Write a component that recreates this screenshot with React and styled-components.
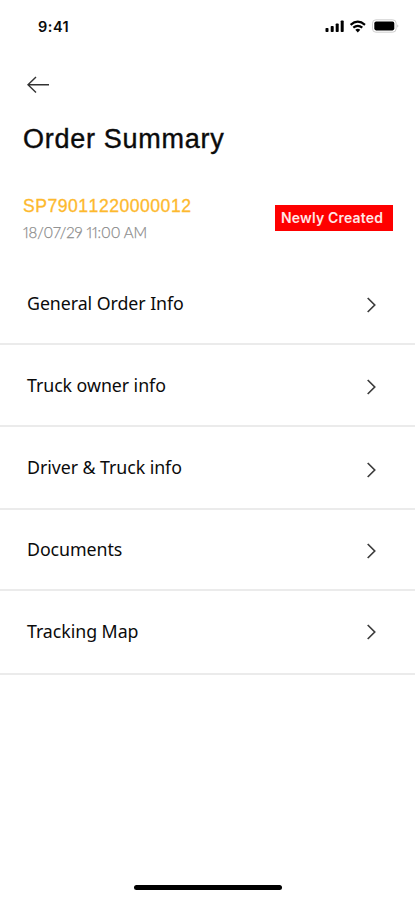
import React from "react";
import styled, { createGlobalStyle } from "styled-components";

const GlobalStyle = createGlobalStyle`
  * { box-sizing: border-box; }
  body { margin: 0; background: #fff; }
`;

const Screen = styled.main`
  display: flex;
  flex-direction: column;
  width: 415px;
  height: 900px;
  background: #fff;
  color: #0b0b0b;
  overflow: hidden;
  white-space: nowrap;
`;

const StatusBar = styled.div`
  display: flex;
  justify-content: space-between;
  align-items: center;
  height: 54px;
  padding: 0 15px 0 38px;
`;

const Clock = styled.span`
  font: 600 14.5px/18px Inter, sans-serif;
  letter-spacing: 0.5px;
`;

const StatusIcons = styled.svg`
  display: block;
  width: 76px;
  height: 18px;
`;

const BackButton = styled.button`
  display: flex;
  align-items: center;
  width: 50px;
  height: 60px;
  padding: 0;
  margin-left: 26px;
  border: 0;
  background: none;
`;

const Title = styled.h1`
  margin: 9px 0 0 23px;
  font: 400 27px/32px "Liberation Sans", Arial, sans-serif;
  letter-spacing: 0.72px;
  -webkit-text-stroke: 0.4px #0b0b0b;
`;

const OrderHeader = styled.header`
  display: flex;
  justify-content: space-between;
  align-items: flex-start;
  height: 107px;
  padding: 41px 22px 0 23px;
`;

const OrderId = styled.div`
  font: 400 17.6px/20px "Liberation Sans", Arial, sans-serif;
  font-kerning: none;
  letter-spacing: 0.5px;
  color: #fdb92e;
  -webkit-text-stroke: 0.3px #fdb92e;
`;

const OrderDate = styled.div`
  margin-top: 6px;
  font: 300 15px/20px Lato, sans-serif;
  letter-spacing: -0.1px;
  font-variant-numeric: proportional-nums;
  color: #8c8c8c;
  -webkit-text-stroke: 0.25px #8c8c8c;
`;

const Badge = styled.span`
  display: flex;
  align-items: center;
  width: 118px;
  height: 26px;
  margin-top: 9px;
  padding-left: 6px;
  background: #fe0000;
  color: #ffe6e6;
  font: 600 14px/18px Inter, sans-serif;
  letter-spacing: 0.18px;
`;

const Menu = styled.ul`
  margin: 0;
  padding: 0;
  list-style: none;
`;

const MenuRow = styled.li`
  display: flex;
  justify-content: space-between;
  align-items: flex-start;
  height: ${(p) => p.$height}px;
  padding: ${(p) => p.$top}px 37px 0 27px;
  border-bottom: 2px solid #ebebeb;
`;

const MenuLabel = styled.span`
  font: 400 17.8px/24px "Noto Sans", sans-serif;
  letter-spacing: -0.06px;
`;

const Chevron = styled.svg`
  display: block;
  width: 12px;
  height: 18px;
  margin-top: ${(p) => p.$drop}px;
`;

const HomeIndicator = styled.div`
  width: 148px;
  height: 5px;
  margin: auto auto 10px 134px;
  border-radius: 3px;
  background: #000;
`;

const rows = [
  { label: "General Order Info", height: 83, top: 29, drop: 5 },
  { label: "Truck owner info", height: 82, top: 28, drop: 5 },
  { label: "Driver & Truck info", height: 83, top: 28, drop: 6 },
  { label: "Documents", height: 81, top: 27, drop: 5 },
  { label: "Tracking Map", height: 84, top: 28, drop: 4 },
];

export default function App() {
  return (
    <>
      <GlobalStyle />
      <Screen>
        <StatusBar>
          <Clock>9:41</Clock>
          <StatusIcons viewBox="0 0 76 18" aria-label="Signal, wifi and battery">
            <rect x="1.5" y="10" width="3" height="4" rx="0.8" />
            <rect x="6.7" y="8" width="3" height="6" rx="0.8" />
            <rect x="11.7" y="5.5" width="3" height="8.5" rx="0.8" />
            <rect x="16.7" y="2.5" width="3" height="11.5" rx="0.8" />
            <g fill="none" stroke="#000" strokeWidth="2.2">
              <path d="M26.6 6.8Q33.8 0.6 41 6.8" />
              <path d="M29.3 9.7Q33.8 5.9 38.3 9.7" />
            </g>
            <path d="M31.3 11.8Q33.8 9.8 36.3 11.8L33.8 14.4Z" />
            <rect x="48.5" y="1.8" width="23.6" height="12.4" rx="3.4" fill="none" stroke="#cfcfcf" />
            <rect x="50.3" y="3.6" width="20" height="8.8" rx="1.8" />
            <path d="M73.5 6.2Q75.3 8 73.5 9.8Z" fill="#aaa" />
          </StatusIcons>
        </StatusBar>
        <BackButton aria-label="Back">
          <svg width="26" height="20" viewBox="0 0 26 20" fill="none" stroke="#333" strokeWidth="1.4">
            <path d="M2 10.8H23M10 3L2 10.8L10 18.5" />
          </svg>
        </BackButton>
        <Title>Order Summary</Title>
        <OrderHeader>
          <div>
            <OrderId>SP79011220000012</OrderId>
            <OrderDate>18/07/29 11:00 AM</OrderDate>
          </div>
          <Badge>Newly Created</Badge>
        </OrderHeader>
        <Menu>
          {rows.map((r) => (
            <MenuRow key={r.label} $height={r.height} $top={r.top}>
              <MenuLabel>{r.label}</MenuLabel>
              <Chevron $drop={r.drop} viewBox="0 0 12 18" fill="none" stroke="#3c3c3c" strokeWidth="1.7">
                <path d="M1.7 2L8.7 9L1.7 16" />
              </Chevron>
            </MenuRow>
          ))}
        </Menu>
        <HomeIndicator />
      </Screen>
    </>
  );
}
